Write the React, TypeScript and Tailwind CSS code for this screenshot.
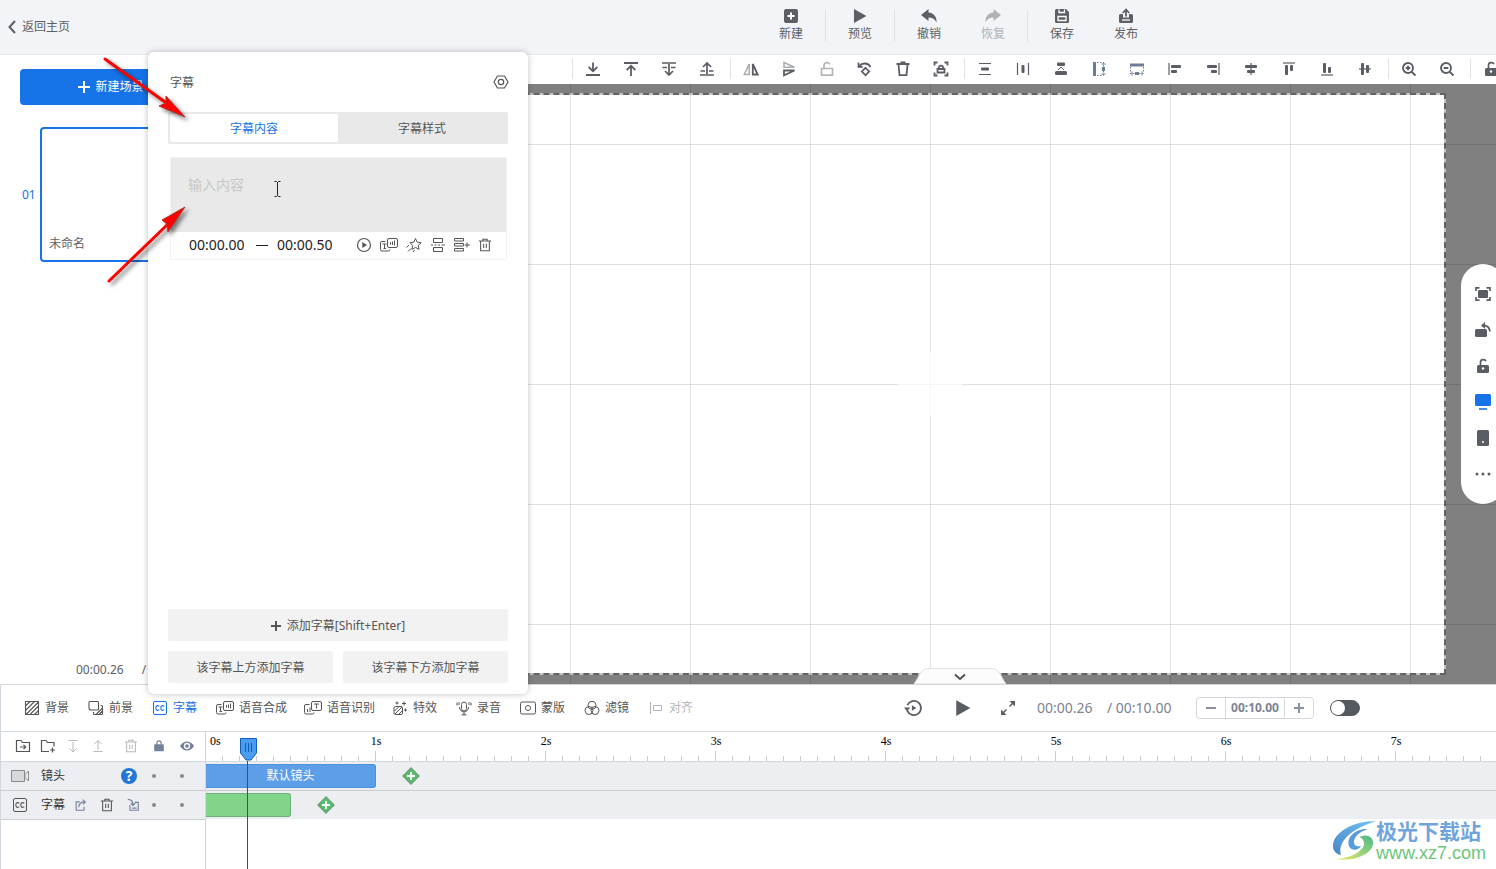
import type { ReactNode } from 'react';
import clsx from 'clsx';

const icons: Record<string, ReactNode> = {
  add: (
    <>
      <rect fill="currentColor" height="14" rx="2" stroke="none" width="14" x="1" y="1" />
      <path d="M8 4.5v7M4.5 8h7" stroke="#fff" strokeWidth="2" />
    </>
  ),
  play: <path d="M2 1v14l12.5-7z" fill="currentColor" stroke="none" />,
  undo: <path d="M7.5 1L0 7l7.500 6V9.500c4 0 6.500 1.500 8 5C16 9 13 5 7.500 4.500z" fill="currentColor" stroke="none" />,
  redo: <path d="M8.500 1L16 7l-7.500 6V9.500c-4 0-6.500 1.500-8 5C0 9 3 5 8.500 4.500z" fill="currentColor" stroke="none" />,
  save: (
    <>
      <path d="M1 2.500A1.500 1.500 0 012.500 1H12l3 3v9.500a1.500 1.500 0 01-1.500 1.500h-11A1.500 1.500 0 011 13.500z" fill="currentColor" stroke="none" />
      <path d="M4 8.500h8v4H4zM5 1.500v3h5.500v-3" stroke="#fff" strokeWidth="1.3" />
    </>
  ),
  publish: (
    <>
      <path d="M1 7.500A1.500 1.500 0 012.500 6H5v3.500h6V6h2.500A1.500 1.500 0 0115 7.500v6a1.500 1.500 0 01-1.500 1.500h-11A1.500 1.500 0 011 13.500z" fill="currentColor" stroke="none" />
      <path d="M8 8.500V3M4.800 5L8 1.500 11.200 5" strokeWidth="1.8" />
      <path d="M4 12h8" stroke="#fff" strokeWidth="1.3" />
    </>
  ),
  toBottom: <path d="M1 14h14M8 1.500V10M3.700 6L8 10.300 12.300 6" strokeWidth="1.8" />,
  toTop: <path d="M1 2h14M8 15V5M3.700 9L8 4.700 12.300 9" strokeWidth="1.8" />,
  stepDown: <path d="M1 2h14M1.500 6.500H6M10 6.500h4.500M8 3v10M4 10l4 4 4-4" strokeWidth="1.7" />,
  stepUp: <path d="M1 14h14M1.500 10H6M10 10h4.500M8 13V3M4 6l4-4 4 4" strokeWidth="1.7" />,
  flipX: (
    <>
      <path d="M6.200 3v10.500H1.300z" opacity="0.5" strokeWidth="1.6" />
      <path d="M9.800 3v10.500h4.900z" strokeWidth="1.8" />
    </>
  ),
  flipY: (
    <>
      <path d="M3 6.200h10.500L3 1.500z" opacity="0.5" strokeWidth="1.6" />
      <path d="M3 9.500h10.500L3 14.300z" strokeWidth="1.8" />
    </>
  ),
  unlock: <path d="M2.500 7.500h11v6.700h-11zM5 7V4.500c0-3.500 5-3.800 5.800-1" strokeWidth="1.7" />,
  rotate: (
    <>
      <path d="M2.500 5C5 1.500 11 1.500 13.500 6M1.500 1.500v4.300h4.200" strokeWidth="1.8" />
      <path d="M8.500 6.800l3.700 3.700-3.700 3.700-3.700-3.700z" strokeWidth="1.7" />
    </>
  ),
  trash: <path d="M1.500 3h13M5.500 1.500h5M3.500 3.500l1 10.700h7l1-10.700" strokeWidth="1.8" />,
  focusLock: (
    <>
      <path d="M1.500 4.500v-3h3M11.500 1.500h3v3M14.500 11.500v3h-3M4.500 14.500h-3v-3" strokeWidth="1.8" />
      <path d="M4.500 8h7v3.500h-7zM5.700 8c0-4.500 4.600-4.500 4.600 0" strokeWidth="1.8" />
    </>
  ),
  spaceY: (
    <>
      <path d="M2 2.500h12M2 13.500h12" strokeWidth="1.2" />
      <rect fill="currentColor" height="3" rx="1" stroke="none" width="8" x="4" y="6.500" />
    </>
  ),
  spaceX: (
    <>
      <path d="M2.500 2v12M13.500 2v12" strokeWidth="1.2" />
      <rect fill="currentColor" height="8" rx="1" stroke="none" width="3" x="6.500" y="4" />
    </>
  ),
  stack: (
    <>
      <rect fill="currentColor" height="3.500" rx="1" stroke="none" width="8" x="4" y="1.500" />
      <rect fill="currentColor" height="4" rx="1.500" stroke="none" width="12" x="2" y="10" />
      <path d="M5 9l3-3 3 3" strokeWidth="1" />
    </>
  ),
  sameHeight: (
    <>
      <path d="M3.500 1v14" strokeWidth="3" />
      <path d="M6 1.500h5M6 14.500h5M12.500 1v14" strokeDasharray="1.500 1.500" strokeWidth="1" />
      <path d="M12.500 6v4" strokeWidth="3" />
      <path d="M10.500 3h4M10.500 13h4" strokeWidth="1" />
    </>
  ),
  sameWidth: (
    <>
      <path d="M1 4h14" strokeWidth="3" />
      <path d="M1.500 6v5M14.500 6v5M1 12.500h14" strokeDasharray="1.500 1.500" strokeWidth="1" />
      <path d="M6 12.500h4" strokeWidth="3" />
      <path d="M3 10.500v4M13 10.500v4" strokeWidth="1" />
    </>
  ),
  zoomIn: <path d="M12 7A5 5 0 112 7a5 5 0 0110 0zM10.800 10.800L14.500 14.500M7 4.700v4.600M4.700 7h4.600" strokeWidth="1.9" />,
  zoomOut: <path d="M12 7A5 5 0 112 7a5 5 0 0110 0zM10.800 10.800L14.500 14.500M4.700 7h4.600" strokeWidth="1.9" />,
  lockOpen: (
    <>
      <rect fill="currentColor" height="8" rx="1.500" stroke="none" width="12" x="2" y="7" />
      <path d="M5.500 7V4.200c0-3 4.500-3.400 5.500-1" strokeWidth="1.7" />
      <circle cx="8" cy="10.500" fill="#fff" r="1.200" stroke="none" />
    </>
  ),
  fit: (
    <>
      <path d="M1 5V1.800h3.500M11.500 1.800H15V5M15 11v3.200h-3.500M4.500 14.200H1V11" strokeWidth="1.7" />
      <rect fill="currentColor" height="8" rx="1" stroke="none" width="10" x="3" y="4" />
    </>
  ),
  turn: (
    <>
      <rect fill="currentColor" height="8" rx="1.500" stroke="none" width="12" x="0" y="7" />
      <path d="M8.500 3.500c4 0 6 2 6.500 6" strokeWidth="1.8" />
      <path d="M6 3.500L10 0v7z" fill="currentColor" stroke="none" />
    </>
  ),
  monitor: (
    <>
      <rect fill="currentColor" height="12" rx="1.500" stroke="none" width="16" x="0" y="0" />
      <path d="M4 15h8" strokeWidth="1.6" />
    </>
  ),
  tablet: (
    <>
      <rect fill="currentColor" height="16" rx="1.500" stroke="none" width="12" x="2" y="0" />
      <circle cx="8" cy="12" fill="#fff" r="1" stroke="none" />
    </>
  ),
  dots: (
    <g fill="currentColor" stroke="none">
      <circle cx="2" cy="8" r="1.500" />
      <circle cx="8" cy="8" r="1.500" />
      <circle cx="14" cy="8" r="1.500" />
    </g>
  ),
  hex: (
    <>
      <path d="M4.500 2h7L15 8l-3.500 6h-7L1 8z" strokeWidth="1.2" />
      <circle cx="8" cy="8" r="2.700" strokeWidth="1.2" />
    </>
  ),
  circlePlay: (
    <>
      <circle cx="8" cy="8" r="6.500" strokeWidth="1.2" />
      <path d="M6.300 5v6l4.700-3z" fill="currentColor" stroke="none" />
    </>
  ),
  star: <path d="M9.500 1.500l1.700 3.700 4 .5-3 2.700.9 4-3.600-2-3.600 2 .8-4L4 5.700l3.800-.5zM3 8l-2.500 2.500M5 11.500L2 14.500M8.500 13L7 15" />,
  splitRows: <path d="M3.500 5.500v-4h9v4zM3.500 10.500v4h9v-4zM1 8h2M4.500 8h2M8 8h2M11.500 8h3.500" />,
  rowsPlus: <path d="M0.500 1.500h9v2.500h-9zM0.500 6.500h9v2.500h-9zM0.500 11.500h9v2.500h-9zM13 5.500v5M10.500 8h5.500" />,
  bin: <path d="M1 3.500h14M5.500 3.500v-2h5v2M3 3.500v11h10v-11M6.500 6.500v5M9.500 6.500v5" strokeWidth="1.2" />,
  hatch: <path d="M1.500 1.500h13v13h-13zM1.500 6l4.500-4.500M1.500 10.500l9-9M2 14.500L14.500 2M6 14.500L14.500 6M10.500 14.500l4-4" strokeWidth="1.1" />,
  layers: <path d="M3 1.500h6.500a1 1 0 011 1V9a1 1 0 01-1 1H3a2 2 0 01-2-2V2.500a1 1 0 011-1zM12.500 5.500h1a1 1 0 011 1v7a1 1 0 01-1 1h-7a1 1 0 01-1-1v-1.500M8 14.500l6.500-6.500M11 14.500l3.500-3.500" strokeWidth="1.1" />,
  cc: (
    <>
      <rect height="13" rx="1.500" width="13" x="1.500" y="1.500" />
      <path d="M7.300 6.300C5.500 4.800 3.800 6 3.800 8s1.700 3.200 3.500 1.700M12.300 6.300C10.500 4.800 8.800 6 8.800 8s1.700 3.200 3.500 1.700" strokeWidth="1.1" />
    </>
  ),
  effect: <path d="M3.500 6.500H9A1.500 1.500 0 0110.500 8v5A1.500 1.500 0 019 14.500H3.500A1.500 1.500 0 012 13V8a1.500 1.500 0 011.500-1.500zM2.500 11L7 6.500M3 14l7-7M6.500 14.500l4-4M5 1.500v3M3.500 3h3M12 1.500v4M10 3.500h4M13.500 8.500v3M12 10h3" />,
  mic: <path d="M5.500 4.500a2.500 2.500 0 015 0v4a2.500 2.500 0 01-5 0zM3.500 7c0 6.500 9 6.500 9 0M8 12v3M5.500 14.800h5M1 2.500v3M3 2v3M13 2v3M15 2.500v3" />,
  mask: (
    <>
      <rect height="12" rx="1.500" width="15" x="0.500" y="2" />
      <circle cx="8" cy="8" r="2.500" />
    </>
  ),
  filter: (
    <>
      <circle cx="8" cy="5.300" r="4" />
      <circle cx="5" cy="10.500" r="4" />
      <circle cx="11" cy="10.500" r="4" />
    </>
  ),
  alignOff: <path d="M2.500 2v12M5.500 5.500h8v5h-8z" />,
  history: (
    <>
      <path d="M3 10.500A6.300 6.300 0 103 5.500" strokeWidth="1.6" />
      <path d="M0 7.500h5.500L2.700 11z" fill="currentColor" stroke="none" />
      <path d="M7 5.500v5L11 8z" fill="currentColor" stroke="none" />
    </>
  ),
  expand: (
    <>
      <path d="M9.500 6.500l4-4M6.500 9.500l-4 4" strokeWidth="1.6" />
      <path d="M9.500 1H15v5.500zM1 9.500V15h5.500z" fill="currentColor" stroke="none" />
    </>
  ),
  folderIn: <path d="M1.500 13.500v-11H6l1.500 2h7v9zM5 9h5.500M8.500 6.800L10.700 9l-2.200 2.200" strokeWidth="1.2" />,
  folderAdd: <path d="M9 13.500H1.500v-11H6l1.500 2H14v4M12.500 9.500v5M10 12h5" strokeWidth="1.2" />,
  arrowDown: <path d="M3.500 2.500h9M8 4v10M4.500 10.500L8 14l3.500-3.500" />,
  arrowUp: <path d="M3.500 13.500h9M8 12V2.500M4.500 6L8 2.500 11.500 6" />,
  lock: (
    <>
      <rect fill="currentColor" height="8" rx="0.500" stroke="none" width="11" x="2.500" y="6" />
      <path d="M5.500 6.500V5c0-3.700 5-3.700 5 0v1.500" strokeWidth="1.4" />
    </>
  ),
  eye: (
    <>
      <path d="M1 8c3.500-6 10.500-6 14 0-3.500 6-10.500 6-14 0z" fill="currentColor" stroke="none" />
      <circle cx="8" cy="8" fill="#76819b" r="2.500" stroke="#fff" strokeWidth="1.3" />
    </>
  ),
  exportClip: <path d="M6.500 4.500H2.500v9.500h9V10M5.500 10.500c0-4 2.500-6 7-6M10 1.800l3 2.700-3 2.700" strokeWidth="1.3" />,
  importClip: <path d="M2 1.500c4 0 6 2 6 6.500M5.500 6L8 8.500 10.500 6M10 5h4v9H4.500V8M7 11.500h5" strokeWidth="1.3" />,
};

function Icon({ name, className = 'size-4' }: { name: string; className?: string }) {
  return (
    <svg aria-hidden="true" className={clsx('shrink-0', className)} fill="none" stroke="currentColor" viewBox="0 0 16 16">
      {icons[name]}
    </svg>
  );
}

// A guide line plus two blocks, shared by the six align tools
function AlignIcon({ line, blocks }: { line: string; blocks: number[][] }) {
  return (
    <svg aria-hidden="true" className="size-4" fill="currentColor" viewBox="0 0 16 16">
      <path d={line} stroke="currentColor" strokeWidth="1.2" />
      {blocks.map(([x, y, w, h]) => (
        <rect height={h} key={`${x}-${y}`} rx="1" width={w} x={x} y={y} />
      ))}
    </svg>
  );
}

// Text card and sound card overlapping; flipped for recognition
function SpeechIcon({ flipped = false }: { flipped?: boolean }) {
  return (
    <svg aria-hidden="true" className="h-4 w-[18px] shrink-0" fill="none" stroke="currentColor" viewBox="0 0 18 16">
      <rect height="9" rx="1.500" width="10" x="7.500" y="1.500" />
      <path d="M5.500 4.500H2A1.500 1.500 0 00.5 6v6.500A1.500 1.500 0 002 14h6.500a1.500 1.500 0 001.500-1.500" />
      {flipped ? (
        <path d="M10 4h5M12.500 4v4.500M3.500 9v3M6 7.500v4.500" />
      ) : (
        <path d="M2.500 7h4M4.500 7v4.500M3.500 11.500h2.500M10.500 5v2.500M12.500 4.500v3.500M14.500 3.500v5" />
      )}
    </svg>
  );
}

const headerActions = [
  [{ icon: 'add', label: '新建' }],
  [{ icon: 'play', label: '预览' }],
  [{ icon: 'undo', label: '撤销' }, { icon: 'redo', label: '恢复', disabled: true }],
  [{ icon: 'save', label: '保存' }, { icon: 'publish', label: '发布' }],
];

const toolGroups: { label: string; icon: ReactNode; tone?: string }[][] = [
  [
    { label: '置底', icon: <Icon name="toBottom" /> },
    { label: '置顶', icon: <Icon name="toTop" /> },
    { label: '下移一层', icon: <Icon name="stepDown" /> },
    { label: '上移一层', icon: <Icon name="stepUp" /> },
  ],
  [
    { label: '水平翻转', icon: <Icon name="flipX" /> },
    { label: '垂直翻转', icon: <Icon name="flipY" /> },
    { label: '解锁', icon: <Icon name="unlock" />, tone: 'text-[#b4b5b7]' },
    { label: '旋转', icon: <Icon name="rotate" /> },
    { label: '删除', icon: <Icon name="trash" /> },
    { label: '锁定焦点', icon: <Icon name="focusLock" /> },
  ],
  [
    { label: '垂直等距', icon: <Icon name="spaceY" /> },
    { label: '水平等距', icon: <Icon name="spaceX" /> },
    { label: '堆叠', icon: <Icon name="stack" /> },
    { label: '等高', icon: <Icon name="sameHeight" />, tone: 'text-[#6b7d92]' },
    { label: '等宽', icon: <Icon name="sameWidth" />, tone: 'text-[#6b7d92]' },
    { label: '左对齐', icon: <AlignIcon blocks={[[4, 4, 10, 3], [4, 9, 6, 3]]} line="M2 2v12" /> },
    { label: '右对齐', icon: <AlignIcon blocks={[[2, 4, 10, 3], [6, 9, 6, 3]]} line="M14 2v12" /> },
    { label: '水平居中', icon: <AlignIcon blocks={[[2, 4, 12, 3], [4, 9, 8, 3]]} line="M8 2v12" /> },
    { label: '顶对齐', icon: <AlignIcon blocks={[[4, 4, 3, 10], [9, 4, 3, 6]]} line="M2 2h12" /> },
    { label: '底对齐', icon: <AlignIcon blocks={[[4, 2, 3, 10], [9, 6, 3, 6]]} line="M2 14h12" /> },
    { label: '垂直居中', icon: <AlignIcon blocks={[[4, 2, 3, 12], [9, 4, 3, 8]]} line="M2 8h12" /> },
  ],
  [
    { label: '放大', icon: <Icon name="zoomIn" /> },
    { label: '缩小', icon: <Icon name="zoomOut" /> },
  ],
  [{ label: '锁定', icon: <Icon name="lockOpen" /> }],
];

const sideTools = [
  { icon: 'fit', label: '适应' },
  { icon: 'turn', label: '转向' },
  { icon: 'lockOpen', label: '解锁' },
  { icon: 'monitor', label: '横屏', active: true },
  { icon: 'tablet', label: '竖屏' },
  { icon: 'dots', label: '更多' },
];

const trackTabs = [
  { icon: 'hatch', label: '背景' },
  { icon: 'layers', label: '前景' },
  { icon: 'cc', label: '字幕', active: true },
  { icon: 'tts', label: '语音合成' },
  { icon: 'asr', label: '语音识别' },
  { icon: 'effect', label: '特效' },
  { icon: 'mic', label: '录音' },
  { icon: 'mask', label: '蒙版' },
  { icon: 'filter', label: '滤镜' },
  { icon: 'alignOff', label: '对齐', disabled: true },
];

function Separator() {
  return <div className="mr-px ml-1 h-5 w-px shrink-0 bg-[#e2e3e5]" />;
}

function Header() {
  return (
    <header className="flex h-[55px] shrink-0 items-start border-b border-[#e8e9eb] bg-[#f3f4f7] text-[#5c6065]">
      <a className="flex h-[53px] items-center gap-1.5 pl-2" href="#home">
        <svg aria-hidden="true" className="h-3.5 w-2" fill="none" stroke="currentColor" strokeWidth="2" viewBox="0 0 8 14">
          <path d="M7 1L1.500 7 7 13" />
        </svg>
        返回主页
      </a>
      <nav className="mr-[338px] ml-auto flex pt-2">
        {headerActions.map((group, i) => (
          <div className="flex" key={i}>
            {i > 0 && <div className="mx-[2px] mt-[2px] h-8 w-px bg-[#e0e2e5]" />}
            {group.map((item: { icon: string; label: string; disabled?: boolean }) => (
              <button
                className="flex w-16 flex-col items-center gap-[2px] disabled:text-[#b0b2b5]"
                disabled={item.disabled}
                key={item.label}
                type="button"
              >
                <Icon name={item.icon} />
                {item.label}
              </button>
            ))}
          </div>
        ))}
      </nav>
    </header>
  );
}

function Sidebar() {
  return (
    <aside className="flex w-[222px] shrink-0 flex-col pt-3.5 text-[#5c6065]">
      <button className="mx-5 flex h-9 items-center justify-center gap-[5px] rounded bg-[#1673e8] text-white" type="button">
        <svg aria-hidden="true" className="size-3" stroke="currentColor" strokeWidth="2" viewBox="0 0 12 12">
          <path d="M6 0v12M0 6h12" />
        </svg>
        新建场景
      </button>
      <div className="mt-[22px] flex items-center pr-5">
        <span className="w-10 pl-[22px] text-[#1673e8]">01</span>
        <div className="flex h-[135px] flex-1 items-end rounded border-2 border-[#1673e8] px-[7px] pb-2">未命名</div>
      </div>
      <div className="mt-auto flex gap-[18px] pb-1.5 pl-[76px]">
        <span>00:00.26</span>
        <span>/</span>
      </div>
    </aside>
  );
}

function Stage() {
  return (
    <section className="relative flex flex-1 overflow-hidden bg-[#808080] pt-[9px] pr-[50px] pb-[9px] pl-48">
      <div className="flex flex-1 border-2 border-dashed border-[#636363] bg-[#c4c4c4]">
        <div className="flex-1 bg-white" />
      </div>
      <div className="absolute inset-0 bg-[linear-gradient(to_right,rgba(0,0,0,0.12)_1px,transparent_1px),linear-gradient(to_bottom,rgba(0,0,0,0.12)_1px,transparent_1px)] bg-[size:120px_120px] bg-[position:108px_60px]" />
      <svg aria-hidden="true" className="absolute top-[268px] left-[676px] size-16 opacity-70" stroke="#fff" viewBox="0 0 64 64">
        <path d="M0 32.500h64M32.500 0v64" />
      </svg>
      <div className="absolute top-[180px] -right-[9px] flex w-11 flex-col items-center gap-5 rounded-full bg-white py-[22px] text-[#5a5e64]">
        {sideTools.map((tool) => (
          <button aria-label={tool.label} className={clsx(tool.active && 'text-[#1673e8]')} key={tool.label} type="button">
            <Icon name={tool.icon} />
          </button>
        ))}
      </div>
      <button aria-label="收起时间轴" className="absolute bottom-0 left-[692px]" type="button">
        <svg aria-hidden="true" className="h-4 w-[92px]" viewBox="0 0 92 16">
          <path d="M0 16C6 8 6 0.500 15 0.500h62c9 0 9 7.500 15 15.500z" fill="#fcfcfc" stroke="#e2e2e2" />
          <path d="M41 6.500l5 4.500 5-4.500" fill="none" stroke="#4a4e55" strokeWidth="1.8" />
        </svg>
      </button>
    </section>
  );
}

function SubtitlePanel() {
  const button = 'flex h-8 flex-1 items-center justify-center gap-1.5 rounded-[2px] bg-[#f2f2f2] pt-px';
  return (
    <section className="absolute top-[52px] bottom-[175px] left-[148px] flex w-[380px] flex-col rounded-md bg-white px-5 pb-[11px] text-[#555] shadow-[0_0_6px_rgba(0,0,0,0.25)]">
      <div className="flex h-[60px] items-center justify-between pl-[2px]">
        <h2 className="pt-px">字幕</h2>
        <button aria-label="设置" className="-mr-px" type="button">
          <Icon name="hex" />
        </button>
      </div>
      <div className="flex h-8 rounded-[2px] bg-[#e9e9e9] p-[2px]" role="tablist">
        <button aria-selected="true" className="flex-1 rounded-[2px] bg-white pt-px text-[#1673e8]" role="tab" type="button">
          字幕内容
        </button>
        <button aria-selected="false" className="flex-1 pt-px" role="tab" type="button">
          字幕样式
        </button>
      </div>
      <div className="mt-[13px] mr-px ml-[2px] rounded-[2px] border border-[#f2f2f2]">
        <textarea
          aria-label="输入内容"
          className="block h-[74px] w-full resize-none bg-[#e9e9e9] px-[17px] pt-[17px] text-sm outline-none placeholder:text-[#c8c8c8]"
          placeholder="输入内容"
        />
        <div className="flex h-[27px] items-center pr-3.5 pb-px pl-[18px]">
          <input aria-label="开始时间" className="w-[67px] text-sm text-[#222]" defaultValue="00:00.00" />
          <span className="h-px w-3 bg-[#222]" />
          <input aria-label="结束时间" className="ml-[9px] w-[68px] text-sm text-[#222]" defaultValue="00:00.50" />
          <div className="ml-auto flex items-center gap-2">
            <button aria-label="播放" type="button"><Icon name="circlePlay" /></button>
            <button aria-label="语音合成" type="button"><SpeechIcon /></button>
            <button aria-label="特效" type="button"><Icon name="star" /></button>
            <button aria-label="拆分" type="button"><Icon name="splitRows" /></button>
            <button aria-label="插入" type="button"><Icon name="rowsPlus" /></button>
            <button aria-label="删除" type="button"><Icon className="size-3.5" name="bin" /></button>
          </div>
        </div>
      </div>
      <div className="mt-auto flex">
        <button className={button} type="button">
          <svg aria-hidden="true" className="size-2.5" stroke="currentColor" strokeWidth="2" viewBox="0 0 10 10">
            <path d="M5 0v10M0 5h10" />
          </svg>
          添加字幕[Shift+Enter]
        </button>
      </div>
      <div className="mt-2.5 flex gap-2.5">
        <button className={button} type="button">该字幕上方添加字幕</button>
        <button className={button} type="button">该字幕下方添加字幕</button>
      </div>
    </section>
  );
}

function Transport() {
  return (
    <div className="ml-auto flex items-center pr-[136px] text-sm text-[#7d8291]">
      <button aria-label="回放" className="text-[#5a5e64]" type="button"><Icon className="size-[18px]" name="history" /></button>
      <button aria-label="播放" className="ml-8 text-[#5a5e64]" type="button"><Icon className="size-[18px]" name="play" /></button>
      <button aria-label="全屏" className="ml-7 text-[#5a5e64]" type="button"><Icon name="expand" /></button>
      <span className="ml-[21px] w-[70px]">00:00.26</span>
      <span className="w-[89px]">/ 00:10.00</span>
      <div className="flex h-[22px] w-[118px] items-stretch rounded border border-[#d5d7dc] text-xs">
        <button aria-label="减少" className="flex w-7 items-center justify-center" type="button">
          <span className="h-[2px] w-2.5 bg-[#8b90a0]" />
        </button>
        <input aria-label="总时长" className="min-w-0 flex-1 border-x border-[#d5d7dc] text-center font-bold" defaultValue="00:10.00" />
        <button aria-label="增加" className="flex w-7 items-center justify-center" type="button">
          <svg aria-hidden="true" className="size-2.5" stroke="#8b90a0" strokeWidth="2" viewBox="0 0 10 10">
            <path d="M5 0v10M0 5h10" />
          </svg>
        </button>
      </div>
      <input
        aria-label="自动"
        className="ml-4 h-4 w-[30px] appearance-none rounded-full border border-[#555a60] bg-[#555a60] before:block before:size-3.5 before:rounded-full before:bg-white"
        role="switch"
        type="checkbox"
      />
    </div>
  );
}

function KeyframeButton() {
  return (
    <button aria-label="添加片段" className="ml-[26px]" type="button">
      <svg aria-hidden="true" className="size-[18px]" viewBox="0 0 18 18">
        <path d="M9 1l8 8-8 8-8-8z" fill="#52c167" stroke="#6f9f78" strokeWidth="1.4" />
        <path d="M9 5v8M5 9h8" stroke="#fff" strokeWidth="2" />
      </svg>
    </button>
  );
}

function Dots() {
  return (
    <div className="flex w-14 shrink-0 justify-around">
      <span className="size-1 rounded-full bg-[#888]" />
      <span className="size-1 rounded-full bg-[#888]" />
    </div>
  );
}

function Ruler() {
  return (
    <div className="flex h-[30px] flex-col justify-between overflow-hidden border-b border-[#d3d7de]">
      <div className="flex pt-px font-['Liberation_Serif',serif] text-xs text-black">
        <span className="w-[85px] shrink-0 pl-1">0s</span>
        {[1, 2, 3, 4, 5, 6, 7].map((second) => (
          <span className="w-[170px] shrink-0 text-center" key={second}>{second}s</span>
        ))}
      </div>
      <div className="flex items-end">
        {Array.from({ length: 80 }).map((_, i) => (
          <span className={clsx('w-[17px] shrink-0 border-r border-[#ccc]', i % 10 === 9 ? 'h-2.5' : 'h-[5px]')} key={i} />
        ))}
      </div>
    </div>
  );
}

function Timeline() {
  return (
    <section className="flex h-[185px] shrink-0 flex-col border-t border-l border-[#d3d7de] bg-white text-[#555]">
      <div className="flex h-[47px] shrink-0 items-center border-b border-[#d3d7de] pl-[23px]">
        <nav className="flex gap-[19px]">
          {trackTabs.map((tab) => (
            <button
              className={clsx(
                'flex items-center gap-[5px] whitespace-nowrap disabled:text-[#b4b5b8]',
                tab.label.length > 2 ? 'w-[69px]' : 'w-[45px]',
                tab.active && 'text-[#1673e8]',
              )}
              disabled={tab.disabled}
              key={tab.label}
              type="button"
            >
              {tab.icon === 'tts' || tab.icon === 'asr' ? <SpeechIcon flipped={tab.icon === 'asr'} /> : <Icon name={tab.icon} />}
              {tab.label}
            </button>
          ))}
        </nav>
        <Transport />
      </div>
      <div className="flex min-h-0 flex-1">
        <div className="w-[205px] shrink-0 border-r border-[#d3d7de]">
          <div className="flex h-[30px] items-center border-b border-[#d3d7de] pb-px pl-[9px]">
            <button aria-label="导入" className="flex w-[25px] justify-center" type="button"><Icon name="folderIn" /></button>
            <button aria-label="新建文件夹" className="flex w-[25px] justify-center" type="button"><Icon name="folderAdd" /></button>
            <button aria-label="下移" className="flex w-[25px] justify-center text-[#b8b9bc]" type="button"><Icon name="arrowDown" /></button>
            <button aria-label="上移" className="flex w-[25px] justify-center text-[#b8b9bc]" type="button"><Icon name="arrowUp" /></button>
            <button aria-label="删除" className="ml-[7px] flex w-7 justify-center text-[#b8b9bc]" type="button"><Icon className="size-3.5" name="bin" /></button>
            <button aria-label="锁定" className="flex w-7 justify-center text-[#76819b]" type="button"><Icon className="size-3.5" name="lock" /></button>
            <button aria-label="显示" className="flex w-7 justify-center text-[#76819b]" type="button"><Icon name="eye" /></button>
          </div>
          <div className="flex h-[29px] items-center border-b border-[#ccced2] bg-[#edeef2] pr-[9px]">
            <svg aria-hidden="true" className="ml-2.5 h-3.5 w-[18px]" fill="none" stroke="#888" viewBox="0 0 18 14">
              <path d="M0.500 1.500h13v11H0.500z" fill="#d8d9dc" />
              <path d="M17.500 2v10L14 8.500v-3z" />
            </svg>
            <span className="ml-3 text-[#333]">镜头</span>
            <button
              aria-label="帮助"
              className="mr-[3px] ml-auto flex size-4 items-center justify-center rounded-full bg-[#2277d6] text-sm leading-4 font-bold text-white"
              type="button"
            >
              ?
            </button>
            <Dots />
          </div>
          <div className="flex h-[29px] items-center border-b border-[#ccced2] bg-[#edeef2] pr-[9px]">
            <Icon className="ml-[11px] size-4" name="cc" />
            <span className="ml-[13px] text-[#333]">字幕</span>
            <div className="ml-auto flex gap-3 text-[#76819b]">
              <button aria-label="导出" type="button"><Icon className="size-3.5" name="exportClip" /></button>
              <button aria-label="删除" className="text-[#555]" type="button"><Icon className="size-3.5" name="bin" /></button>
              <button aria-label="导入字幕" type="button"><Icon className="size-3.5" name="importClip" /></button>
            </div>
            <Dots />
          </div>
        </div>
        <div className="relative min-w-0 flex-1">
          <Ruler />
          <div className="flex h-[29px] items-center border-b border-[#ccced2] bg-[#edeef2]">
            <div className="flex h-6 w-[170px] items-center justify-center rounded-r-[3px] border border-l-0 border-[#4a90dc] bg-[#5c9ee8] text-white">
              默认镜头
            </div>
            <KeyframeButton />
          </div>
          <div className="flex h-7 items-center bg-[#edeef2]">
            <div className="h-6 w-[85px] rounded-r-[3px] border border-l-0 border-[#6faf78] bg-[#82d48b]" />
            <KeyframeButton />
          </div>
          <div className="absolute top-1.5 bottom-0 left-[34px] flex w-[17px] flex-col items-center">
            <svg aria-hidden="true" className="h-[23px] w-[17px] shrink-0" viewBox="0 0 17 23">
              <path d="M0.500 0.500h16V15l-5.500 7h-5L0.500 15z" fill="#4a9cf0" stroke="#0d5fb8" />
              <path d="M5.500 5v9M8.500 5v9M11.500 5v9" stroke="#0d5fb8" />
            </svg>
            <span className="mr-[2px] w-px flex-1 bg-[#e01010]" />
          </div>
        </div>
      </div>
    </section>
  );
}

function Annotations() {
  return (
    <svg aria-hidden="true" className="pointer-events-none absolute top-[50px] left-[96px] h-[245px] w-[200px]" viewBox="96 50 200 245">
      <g className="drop-shadow-[3px_3px_2px_rgba(0,0,0,0.5)]">
        <path d="M105 59l60 43M109 281l58-56" stroke="#f00" strokeLinecap="round" strokeWidth="3" />
        <path d="M185 117l-26-11 7-3 0-7zM185 207l-23 13 5 4 1 8z" fill="#f00" stroke="#a33" />
      </g>
      <path d="M274.500 181.500h2l1 1 1-1h2M277.500 182v14M274.500 196.500h2l1-1 1 1h2" fill="none" stroke="#222" />
    </svg>
  );
}

function Watermark() {
  return (
    <div className="absolute right-2.5 bottom-1.5 flex items-center">
      <svg aria-hidden="true" className="h-10 w-11" viewBox="0 0 44 40">
        <defs>
          <linearGradient id="swooshBlue" x1="0" x2="1" y1="1" y2="0">
            <stop offset="0%" stopColor="#4a86c8" />
            <stop offset="100%" stopColor="#6fc4f2" />
          </linearGradient>
          <linearGradient id="swooshGreen" x1="0" x2="1" y1="1" y2="0">
            <stop offset="0%" stopColor="#f2e86a" />
            <stop offset="60%" stopColor="#86cf7c" />
            <stop offset="100%" stopColor="#4fb58a" />
          </linearGradient>
        </defs>
        <path d="M44 0C20 0 1 12 1 25c0 5 3 8 8 9-3-10 4-24 35-34z" fill="url(#swooshBlue)" />
        <path d="M36 8c-13-1-22 9-19 17 2 5 9 5 12 0-4 1-7 0-7-4 0-5 5-10 14-13z" fill="#5a9bdc" />
        <path d="M27 16c8-4 15 0 14 7C40 33 22 41 4 38c14-1 27-7 28-15 0-4-2-6-5-7z" fill="url(#swooshGreen)" />
      </svg>
      <div className="flex flex-col items-start">
        <span className="text-[21px] leading-6 font-bold text-[#6fa5dc]">极光下载站</span>
        <span className="font-['Liberation_Sans',sans-serif] text-lg leading-5 text-[#6cc67a]">www.xz7.com</span>
      </div>
    </div>
  );
}

export default function App() {
  return (
    <div className="relative flex h-screen flex-col overflow-hidden bg-white font-['Noto_Sans','Noto_Sans_CJK_SC',sans-serif] text-xs">
      <Header />
      <main className="flex min-h-0 flex-1">
        <Sidebar />
        <div className="flex min-w-0 flex-1 flex-col">
          <div className="flex h-[29px] shrink-0 items-center overflow-hidden pb-px pl-[346px] text-[#5a5e64]">
            {toolGroups.map((group, i) => (
              <div className="flex shrink-0 items-center" key={i}>
                <Separator />
                {group.map((tool) => (
                  <button aria-label={tool.label} className={clsx('flex w-[38px] justify-center', tool.tone)} key={tool.label} type="button">
                    {tool.icon}
                  </button>
                ))}
              </div>
            ))}
          </div>
          <Stage />
        </div>
      </main>
      <Timeline />
      <SubtitlePanel />
      <Annotations />
      <Watermark />
    </div>
  );
}
